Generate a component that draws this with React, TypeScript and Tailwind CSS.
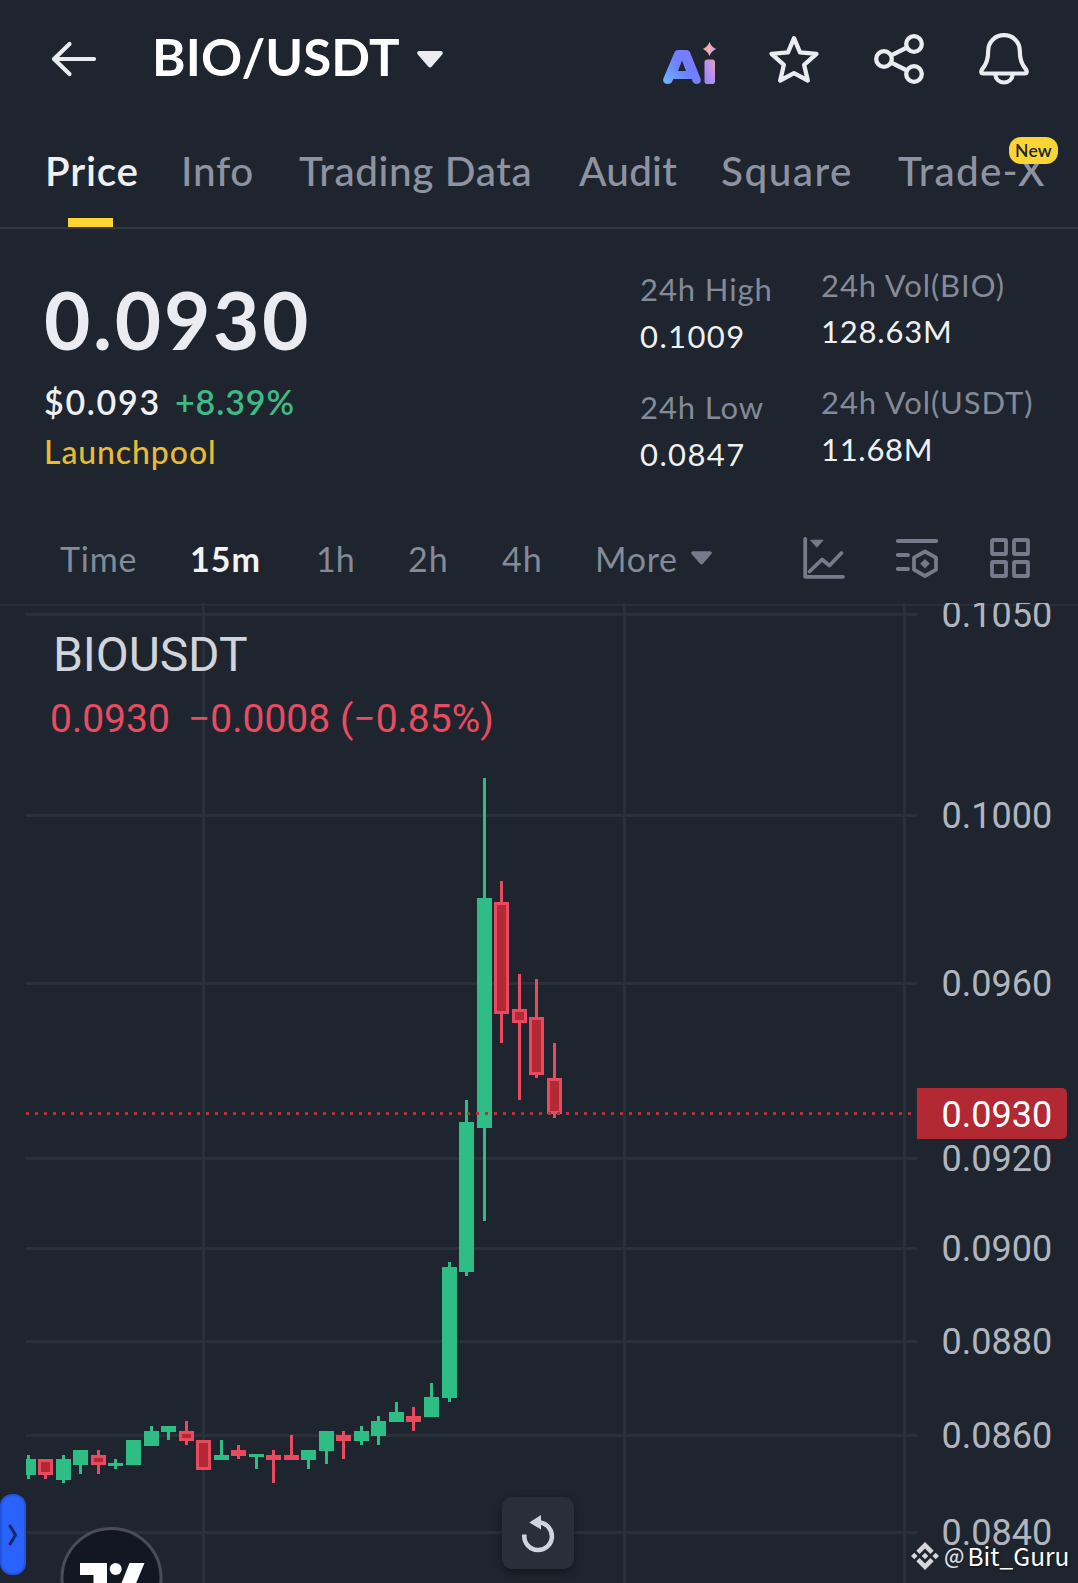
import type { ReactNode } from "react";

// ===== CONSTANTS =====
const UP = "#2ebd85";
const DOWN = "#ea4a5f";
const DOWN_FILL = "#b22833";
const CANDLE_WIDTH = 15;

type Candle = {
  x: number;
  up: boolean;
  top: number;
  bottom: number;
  high: number;
  low: number;
  width?: number;
};

const candles: Candle[] = [
  { x: 26, up: true, top: 1459, bottom: 1475, high: 1455, low: 1479, width: 10 },
  { x: 38, up: false, top: 1459, bottom: 1475, high: 1459, low: 1479 },
  { x: 56, up: true, top: 1459, bottom: 1480, high: 1455, low: 1483 },
  { x: 73, up: true, top: 1450, bottom: 1465, high: 1450, low: 1474 },
  { x: 91, up: false, top: 1455, bottom: 1465, high: 1450, low: 1474 },
  { x: 108, up: true, top: 1463, bottom: 1466, high: 1459, low: 1469 },
  { x: 126, up: true, top: 1440, bottom: 1465, high: 1440, low: 1465 },
  { x: 144, up: true, top: 1431, bottom: 1446, high: 1426, low: 1446 },
  { x: 161, up: true, top: 1426, bottom: 1432, high: 1426, low: 1440 },
  { x: 179, up: false, top: 1431, bottom: 1441, high: 1421, low: 1445 },
  { x: 196, up: false, top: 1440, bottom: 1470, high: 1440, low: 1470 },
  { x: 214, up: true, top: 1455, bottom: 1460, high: 1440, low: 1460 },
  { x: 231, up: false, top: 1450, bottom: 1456, high: 1445, low: 1459 },
  { x: 249, up: true, top: 1454, bottom: 1457, high: 1454, low: 1469 },
  { x: 266, up: false, top: 1455, bottom: 1460, high: 1450, low: 1483 },
  { x: 284, up: false, top: 1455, bottom: 1460, high: 1435, low: 1460 },
  { x: 301, up: true, top: 1450, bottom: 1460, high: 1450, low: 1469 },
  { x: 319, up: true, top: 1431, bottom: 1451, high: 1431, low: 1464 },
  { x: 336, up: false, top: 1435, bottom: 1441, high: 1431, low: 1459 },
  { x: 354, up: true, top: 1431, bottom: 1441, high: 1426, low: 1445 },
  { x: 371, up: true, top: 1421, bottom: 1436, high: 1416, low: 1445 },
  { x: 389, up: true, top: 1412, bottom: 1422, high: 1402, low: 1422 },
  { x: 406, up: false, top: 1416, bottom: 1422, high: 1407, low: 1431 },
  { x: 424, up: true, top: 1397, bottom: 1417, high: 1383, low: 1417 },
  { x: 442, up: true, top: 1267, bottom: 1398, high: 1262, low: 1402 },
  { x: 459, up: true, top: 1122, bottom: 1272, high: 1100, low: 1276 },
  { x: 477, up: true, top: 898, bottom: 1128, high: 778, low: 1221 },
  { x: 494, up: false, top: 902, bottom: 1014, high: 881, low: 1043 },
  { x: 512, up: false, top: 1009, bottom: 1023, high: 974, low: 1100 },
  { x: 529, up: false, top: 1017, bottom: 1075, high: 979, low: 1078 },
  { x: 547, up: false, top: 1078, bottom: 1114, high: 1043, low: 1118 },
];

const gridX = [203.5, 624.5, 904.5];

const priceLevels = [
  { label: "0.1050", y: 614.5 },
  { label: "0.1000", y: 815.5 },
  { label: "0.0960", y: 983.5 },
  { label: "0.0920", y: 1158.5 },
  { label: "0.0900", y: 1248.5 },
  { label: "0.0880", y: 1341.5 },
  { label: "0.0860", y: 1435.5 },
  { label: "0.0840", y: 1532.5 },
];

const tabs = [
  { label: "Info", className: "ml-[42px] w-[71px] tracking-[0.7px]" },
  { label: "Trading Data", className: "ml-[47px] w-[237px] tracking-[0.6px]" },
  { label: "Audit", className: "ml-[43px] w-[100px] tracking-[0.2px]" },
  { label: "Square", className: "ml-[42px] w-[134px] tracking-[1.5px]" },
];

const intervals = [
  { label: "1h", className: "ml-[56px] w-[36px]" },
  { label: "2h", className: "ml-[56px] w-[40px] tracking-[1px]" },
  { label: "4h", className: "ml-[54px] w-[40px] tracking-[1px]" },
];

// ===== ICONS =====
const BackIcon = () => (
  <svg className="h-[36px] w-[46px]" viewBox="0 0 46 36" fill="none" stroke="#eaecef" strokeWidth="4.2" strokeLinecap="round" strokeLinejoin="round">
    <path d="M18.5 3 3 18l15.500 15M3 18h40" />
  </svg>
);

const CaretIcon = ({ className }: { className: string }) => (
  <svg className={className} viewBox="0 0 26 17">
    <path d="M2.500 0h21c2 0 3 2 1.700 3.500L14.800 15.600c-1 1.200-2.600 1.200-3.600 0L.8 3.500C-.5 2 .5 0 2.500 0Z" fill="currentColor" />
  </svg>
);

const AiIcon = () => (
  <svg className="h-[44px] w-[54px]" viewBox="0 0 54 44">
    <defs>
      <linearGradient id="ai-a" x1="0" y1="1" x2="1" y2="0.300">
        <stop offset="0" stopColor="#6ab8ff" />
        <stop offset="0.550" stopColor="#6f80ff" />
        <stop offset="1" stopColor="#7d7bff" />
      </linearGradient>
      <linearGradient id="ai-i" x1="0" y1="1" x2="1" y2="0">
        <stop offset="0" stopColor="#9a83fb" />
        <stop offset="0.600" stopColor="#bd94ee" />
        <stop offset="1" stopColor="#f0a09c" />
      </linearGradient>
      <linearGradient id="ai-star" x1="0" y1="0.500" x2="1" y2="0.500">
        <stop offset="0" stopColor="#f79a80" />
        <stop offset="0.500" stopColor="#eeb0b8" />
        <stop offset="1" stopColor="#b494f2" />
      </linearGradient>
    </defs>
    <path
      d="M15 8h8.500c1.700 0 3 .9 3.600 2.400l10.500 26.300c1 2.700-.9 5.300-3.900 5.300-2.200 0-3.500-1-4.200-2.700L28.700 37H10.300l-1 2.300C8.600 41 7.200 42 5 42c-3.200 0-5.800-2.400-4.600-5.600l11-26C12 8.900 13.300 8 15 8Zm4 10.500-4 10.500h8L19 18.500Z"
      fill="url(#ai-a)"
      fillRule="evenodd"
    />
    <rect x="41.500" y="17.500" width="10.500" height="24.500" rx="2.800" fill="url(#ai-i)" />
    <path d="M46.500 0c1.600 3.800 3.200 5.400 7 7-3.800 1.600-5.400 3.200-7 7-1.600-3.800-3.200-5.400-7-7 3.800-1.600 5.400-3.200 7-7Z" fill="url(#ai-star)" />
  </svg>
);

const StarIcon = () => (
  <svg className="h-[50px] w-[52px]" viewBox="0 0 52 50" fill="none" stroke="#eaecef" strokeWidth="4.300" strokeLinejoin="round">
    <path d="m26 4.200 6 14.200 16.500 1.400-12.400 11 3.700 15.700L26 39.200l-13.800 7.300 3.700-15.700-12.400-11L20 18.400Z" />
  </svg>
);

const ShareIcon = () => (
  <svg className="h-[52px] w-[52px]" viewBox="0 0 52 52" fill="none" stroke="#eaecef" strokeWidth="4.300">
    <circle cx="11" cy="26" r="7.800" />
    <circle cx="41" cy="11" r="7.800" />
    <circle cx="41" cy="41" r="7.800" />
    <path d="m18 22.500 16-8M18 29.500l16 8" />
  </svg>
);

const BellIcon = () => (
  <svg className="h-[54px] w-[50px]" viewBox="0 0 50 54" fill="none" stroke="#eaecef" strokeWidth="4.200" strokeLinejoin="round">
    <path d="M25 3.200c-9 0-15.800 6.800-15.800 15.600 0 8.200-1.200 12.800-5.500 17.700-2 2.300-2 5 .6 5h41.400c2.600 0 2.600-2.700.6-5-4.300-4.900-5.500-9.500-5.500-17.700C40.800 10 34 3.200 25 3.200Z" />
    <path d="M16.300 42.500c.5 4.800 4 8 8.700 8s8.200-3.200 8.700-8" />
  </svg>
);

const ChartIcon = () => (
  <svg className="h-[42px] w-[42px]" viewBox="0 0 42 42" fill="none" stroke="#757b8a" strokeWidth="3.800" strokeLinecap="round" strokeLinejoin="round">
    <path d="M2.200 2v37.800H40" />
    <path d="m6.500 34.500 12.500-12 7.500 6L38.500 16" />
    <path d="M8 3.200h12L14 10Z" fill="#757b8a" strokeWidth="1" />
  </svg>
);

const IndicatorIcon = () => (
  <svg className="h-[42px] w-[42px]" viewBox="0 0 42 42" fill="none" stroke="#757b8a" strokeWidth="3.800" strokeLinejoin="round">
    <path d="M1.800 4h38.400M1.800 18H12M1.800 32H12" strokeLinecap="round" />
    <path d="m29 14.500 11 6.200v12L29 39l-11-6.300v-12Z" />
    <path d="m29 22.200 4.500 4.500-4.500 4.500-4.500-4.500Z" fill="#757b8a" strokeWidth="0.500" />
  </svg>
);

const GridIcon = () => (
  <svg className="h-[40px] w-[40px]" viewBox="0 0 40 40" fill="none" stroke="#757b8a" strokeWidth="3.800">
    <rect x="2" y="2" width="14" height="14" rx="1" />
    <rect x="24" y="2" width="14" height="14" rx="1" />
    <rect x="2" y="24" width="14" height="14" rx="1" />
    <rect x="24" y="24" width="14" height="14" rx="1" />
  </svg>
);

const BinanceIcon = () => (
  <svg className="h-[28px] w-[28px]" viewBox="0 0 28 28" fill="#d6d7d9">
    <path d="m14 0 8.700 8.700-3.300 3.300L14 6.600 8.600 12 5.300 8.700Z" />
    <path d="m14 28 8.700-8.700-3.300-3.300-5.400 5.400L8.600 16l-3.300 3.300Z" />
    <path d="m14 10.700 3.300 3.300-3.300 3.300-3.300-3.300ZM3.300 10.700 6.600 14l-3.300 3.300L0 14ZM24.700 10.700 28 14l-3.300 3.300-3.300-3.300Z" />
  </svg>
);

// ===== SUB-COMPONENTS =====
const Stat = ({ label, children }: { label: ReactNode; children: ReactNode }) => (
  <div className="text-[31px] leading-[40px] whitespace-nowrap">
    <p className="tracking-[0.9px] text-[#848a97]">{label}</p>
    <div className="text-[#eff0f4]">{children}</div>
  </div>
);

const CandleShape = ({ candle }: { candle: Candle }) => {
  const { x, up, top, bottom, high, low, width = CANDLE_WIDTH } = candle;
  const height = bottom - top;
  const color = up ? UP : DOWN;
  // the wick hangs on the full candle, also where the body is cut by the chart edge
  const wickX = x + width - 9;
  return (
    <g>
      <rect x={wickX} y={high} width={3} height={low - high} fill={color} />
      <rect x={x} y={top} width={width} height={height} fill={color} />
      {!up && height > 6 && (
        <rect x={x + 3} y={top + 3} width={width - 6} height={height - 6} fill={DOWN_FILL} />
      )}
    </g>
  );
};

const PriceChart = () => (
  <svg className="block h-[980px] w-full" viewBox="0 603 1078 980">
    {/* Grid */}
    <rect x="0" y="604" width="1078" height="2" fill="#282e38" />
    {gridX.map((x) => (
      <rect key={x} x={x - 1.5} y="603" width="3" height="980" fill="#2a303a" />
    ))}
    {priceLevels.map(({ label, y }) => (
      <rect key={label} x="26" y={y - 1.5} width="891" height="3" fill="#2a303a" />
    ))}

    {/* Candles */}
    {candles.map((candle) => (
      <CandleShape key={candle.x} candle={candle} />
    ))}

    {/* Last price line */}
    <line x1="26" x2="914" y1="1113.500" y2="1113.500" stroke="#b2333f" strokeWidth="3" strokeDasharray="3 6" />

    {/* Price axis */}
    <g fontFamily="Roboto, sans-serif" fontSize="36">
      {priceLevels.map(({ label, y }) => (
        <text key={label} x="941.500" y={y + 12.4} fill="#b2b5be">
          {label}
        </text>
      ))}
      <path d="M917 1088h145a5 5 0 0 1 5 5v41a5 5 0 0 1-5 5H917Z" fill={DOWN_FILL} />
      <text x="941.500" y="1126.500" fill="#ffffff">
        0.0930
      </text>
    </g>

    {/* TradingView badge */}
    <circle cx="111.500" cy="1578" r="49.500" fill="#131722" stroke="#4a4d57" strokeWidth="3" />
    <path d="M80 1563h27v20H93.500v-8H80Z" fill="#ffffff" />
    <circle cx="115.700" cy="1569" r="6" fill="#ffffff" />
    <path d="M129.500 1563h15l-8.300 20h-14.700Z" fill="#ffffff" />
  </svg>
);

// ===== MAIN COMPONENT =====
export default function App() {
  return (
    <div className="h-[1583px] w-[1078px] overflow-hidden bg-[#1e252e] font-['Lato',sans-serif]">
      {/* Header */}
      <header className="flex h-[112px] items-center pl-[51px]">
        <div className="pt-[6px]">
          <BackIcon />
        </div>
        <h1 className="ml-[55px] w-[250px] text-[51px] leading-none font-bold tracking-[0.1px] whitespace-nowrap text-white">
          BIO/USDT
        </h1>
        <CaretIcon className="mt-[6px] ml-[15px] h-[17px] w-[26px] text-[#eaecef]" />
        <div className="flex items-center pt-[6px] pl-[220px]">
          <div className="pt-[10px]">
            <AiIcon />
          </div>
          <div className="ml-[51px]">
            <StarIcon />
          </div>
          <div className="ml-[53px]">
            <ShareIcon />
          </div>
          <div className="ml-[54px]">
            <BellIcon />
          </div>
        </div>
      </header>

      {/* Tabs */}
      <nav className="flex h-[117px] border-b-2 border-[#333943] pl-[45px] text-[40.5px] leading-[117px] font-medium whitespace-nowrap text-[#8d93a1]">
        <div className="relative w-[94px] font-semibold tracking-[0.8px] text-[#eff0f4]">
          Price
          <span className="absolute bottom-0 left-[23px] h-[9px] w-[45px] bg-[#fcd535]" />
        </div>
        {tabs.map(({ label, className }) => (
          <div key={label} className={className}>
            {label}
          </div>
        ))}
        <div className="relative ml-[43px] w-[150px] tracking-[1.2px]">
          Trade-X
          <span className="absolute top-[25px] left-[111px] h-[27px] w-[49px] rounded-[12px] bg-[#fcd535] text-center text-[17.5px] leading-[27px] font-semibold tracking-[0.3px] text-[#202630]">
            New
          </span>
        </div>
      </nav>

      {/* Ticker */}
      <section className="flex h-[284px]">
        <div className="w-[640px] pt-[50px] pl-[44px] whitespace-nowrap">
          <p className="text-[80px] leading-[80px] font-bold tracking-[2.7px] text-[#eaecf2]">0.0930</p>
          <p className="mt-[23px] flex text-[34px] leading-[40px] font-semibold">
            <span className="w-[131px] tracking-[1.700px] text-[#eff0f4]">$0.093</span>
            <span className="tracking-[0.900px] text-[#3fb985]">+8.39%</span>
          </p>
          <p className="mt-[10px] text-[32px] leading-[40px] font-medium tracking-[0.9px] text-[#e8bb34]">
            Launchpool
          </p>
        </div>
        <div className="flex w-[181px] flex-col gap-[31px] pt-[40px]">
          <Stat label="24h High">
            <p className="pt-[7px] tracking-[1.4px]">0.1009</p>
          </Stat>
          <Stat label="24h Low">
            <p className="pt-[7px] tracking-[1.4px]">0.0847</p>
          </Stat>
        </div>
        <div className="flex flex-col gap-[31px] pt-[36px]">
          <Stat label="24h Vol(BIO)">
            <p className="pt-[6px] tracking-[0.8px]">128.63M</p>
          </Stat>
          <Stat label="24h Vol(USDT)">
            <p className="pt-[7px] tracking-[0.7px]">11.68M</p>
          </Stat>
        </div>
      </section>

      {/* Intervals */}
      <section className="flex h-[90px] items-center pl-[60px] text-[34px] leading-[90px] whitespace-nowrap text-[#848a97]">
        <span className="w-[78px] pt-[2px] tracking-[0.8px]">Time</span>
        <span className="ml-[52px] w-[70px] pt-[2px] font-bold tracking-[1px] text-[#f2f3f6]">15m</span>
        {intervals.map(({ label, className }) => (
          <span key={label} className={`pt-[2px] ${className}`}>
            {label}
          </span>
        ))}
        <span className="ml-[53px] w-[82px] pt-[2px] tracking-[0.700px]">More</span>
        <CaretIcon className="ml-[14px] h-[14px] w-[21px] text-[#757b8a]" />
        <div className="flex items-center pl-[91px]">
          <ChartIcon />
          <div className="ml-[51px]">
            <IndicatorIcon />
          </div>
          <div className="ml-[52px]">
            <GridIcon />
          </div>
        </div>
      </section>

      {/* Chart */}
      <main className="relative">
        <PriceChart />

        {/* Legend */}
        <div className="absolute top-[24px] left-[51px] font-['Roboto',sans-serif] whitespace-nowrap">
          <p className="pl-[2px] text-[48px] leading-[56px] tracking-[-0.1px] text-[#d1d4dc]">BIOUSDT</p>
          <p className="flex pt-[12px] text-[39px] leading-[48px] text-[#e84c60]">
            <span className="-ml-[1px] w-[138px]">0.0930</span>
            <span className="w-[152px]">−0.0008</span>
            <span>(−0.85%)</span>
          </p>
        </div>

        {/* Side drawer handle */}
        <button
          type="button"
          aria-label="Open tools"
          className="absolute top-[891px] left-0 flex h-[81px] w-[26px] items-center justify-center rounded-[12px] border-2 border-[#2554dc] bg-[#2962ff]"
        >
          <svg className="h-[22px] w-[10px]" viewBox="0 0 10 22" fill="none" stroke="#17295f" strokeWidth="3">
            <path d="m1.500 1 6 10-6 10" />
          </svg>
        </button>

        {/* Reset button */}
        <button
          type="button"
          aria-label="Reset chart"
          className="absolute top-[894px] left-[502px] flex size-[72px] items-center justify-center rounded-[10px] bg-[#2a2e39] shadow-[0_3px_8px_rgba(0,0,0,0.4)]"
        >
          <svg className="size-[72px]" viewBox="0 0 72 72" fill="none">
            <path d="M22.300 37.500v2A13.800 13.800 0 1 0 38 25.600" stroke="#d1d4dc" strokeWidth="4.500" />
            <path d="M27.300 25.500 39 18v14.500Z" fill="#d1d4dc" />
          </svg>
        </button>

        {/* Watermark */}
        <div className="absolute top-[936px] left-[911px] flex items-center font-['Noto_Sans_CJK_SC',sans-serif] text-[24.5px] leading-[32px] whitespace-nowrap text-white">
          <BinanceIcon />
          <span className="ml-[5px] w-[23.5px] pb-[2px] text-[21px] font-medium text-[#dcdde0]">@</span>
          <span className="[text-shadow:1px_1px_2px_rgba(0,0,0,0.5)]">Bit_Guru</span>
        </div>
      </main>
    </div>
  );
}
